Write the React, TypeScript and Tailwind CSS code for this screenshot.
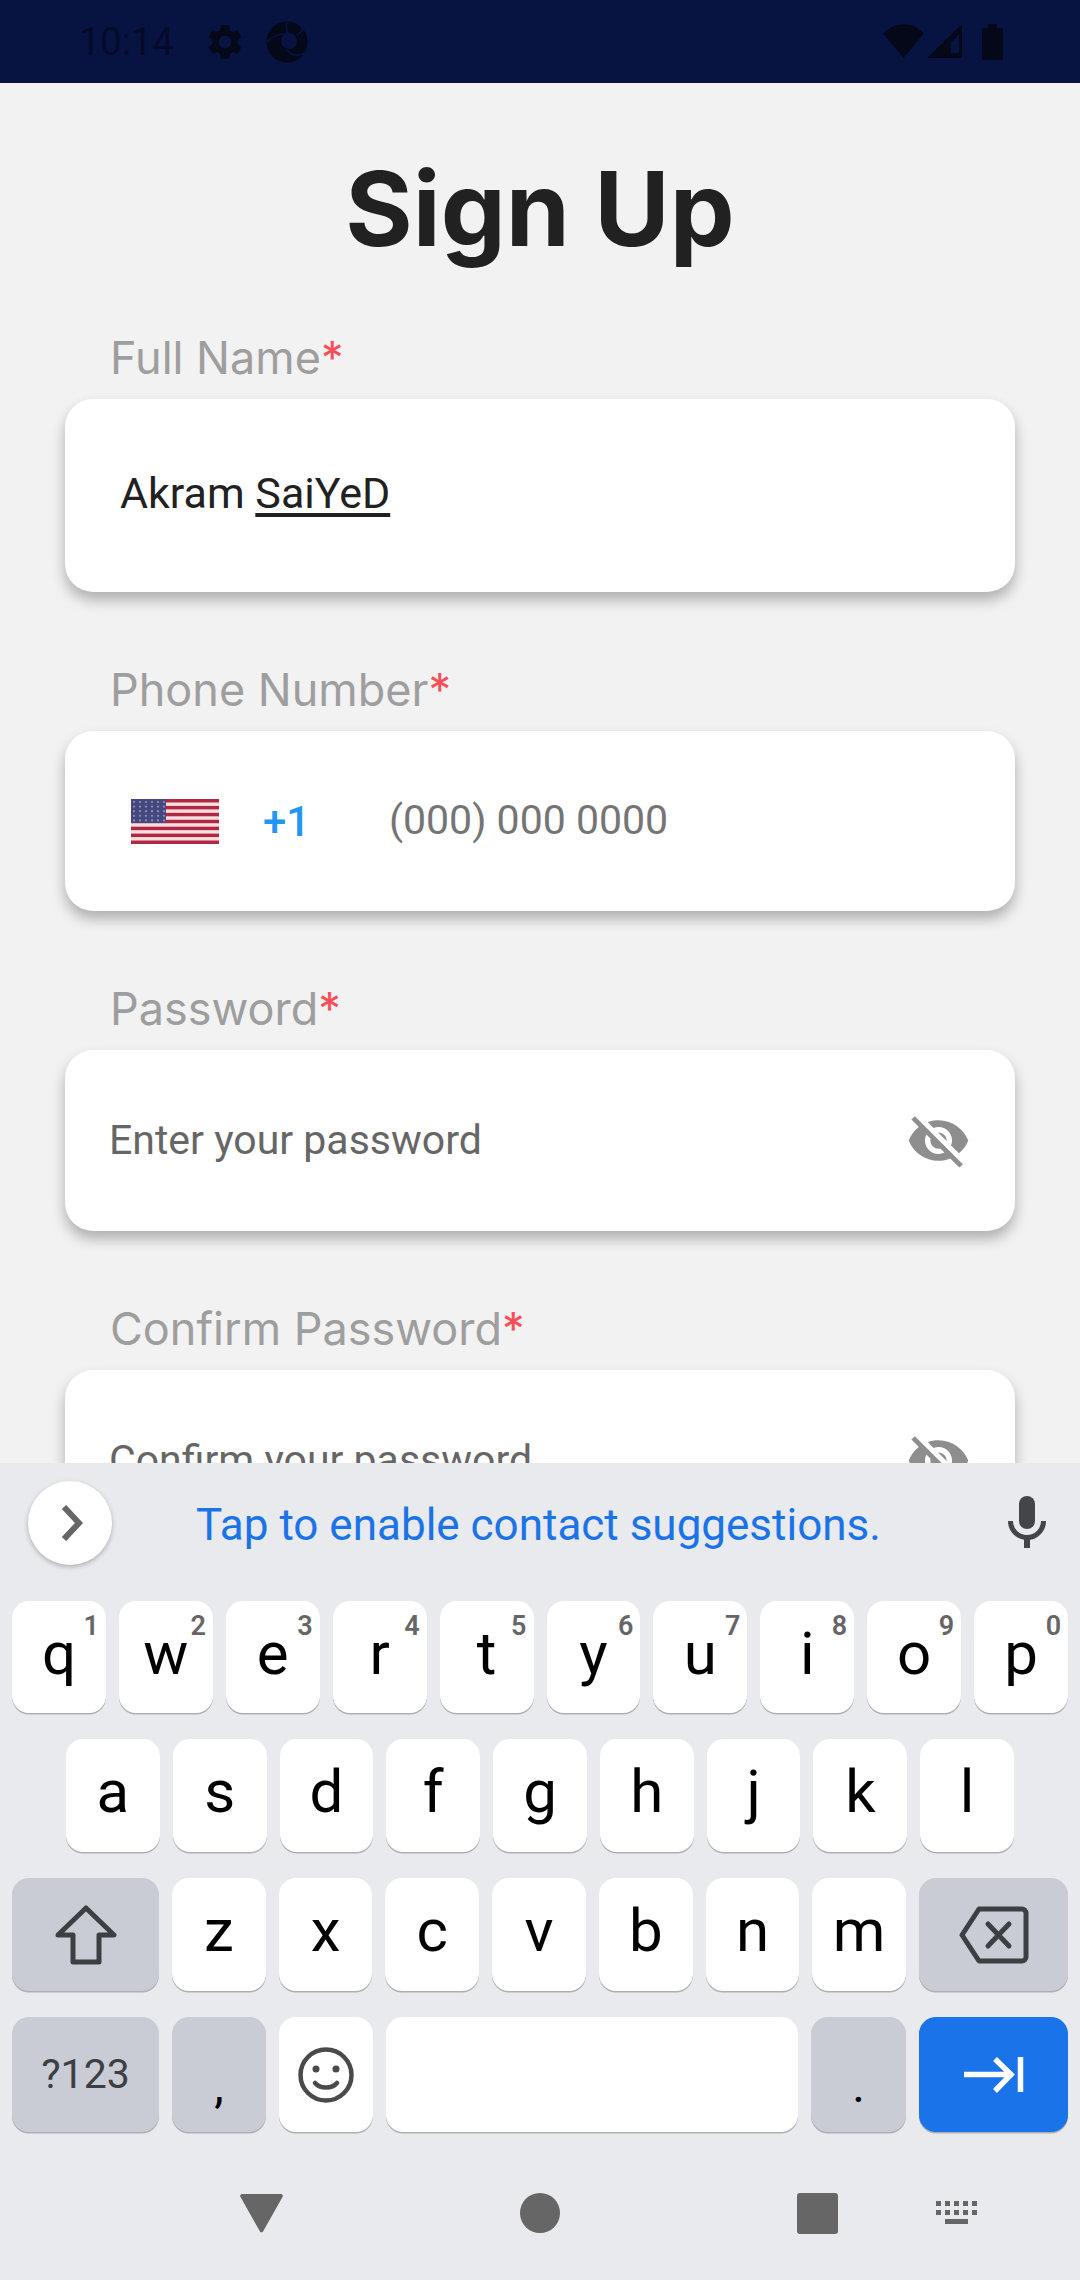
import React from "react";
import { MdSettings, MdVisibilityOff } from "react-icons/md";

const roboto = { fontFamily: "Roboto, sans-serif" };

const Flag = () => (
  <svg width="88" height="45" viewBox="0 0 88 45" className="shrink-0 blur-[0.6px]">
    <rect width="88" height="45" fill="#f3dfe2" />
    {[0, 1, 2, 3, 4, 5, 6].map((i) => (
      <rect key={i} y={i * 6.92} width="88" height="3.46" fill="#b2263f" />
    ))}
    <rect width="35" height="24" fill="#45477f" />
    {[0, 1, 2, 3, 4].map((r) =>
      [0, 1, 2, 3, 4, 5].map((c) => (
        <circle key={`${r}-${c}`} cx={3 + c * 6} cy={3 + r * 4.6} r="1.1" fill="#8f90b5" />
      ))
    )}
  </svg>
);

const Field = ({
  label,
  height,
  children,
}: {
  label: string;
  height: string;
  children: React.ReactNode;
}) => (
  <div className="shrink-0">
    <p className="pl-[45px] h-[50px] mb-[16px] leading-[50px] text-[45px] text-[#9e9e9e]">
      {label}
      <span className="text-[#ff4d55]">*</span>
    </p>
    <div
      className={`${height} bg-white rounded-[28px] shadow-[0_8px_14px_rgba(0,0,0,0.28)] flex items-center`}
    >
      {children}
    </div>
  </div>
);

const PasswordRow = ({ placeholder }: { placeholder: string }) => (
  <div className="flex flex-1 items-center justify-between pl-[44px] pr-[44px]" style={roboto}>
    <span className="text-[41px] text-[#666666]">{placeholder}</span>
    <MdVisibilityOff className="text-[65px] text-[#8e8e8e]" />
  </div>
);

const Key = ({ letter, hint }: { letter: string; hint?: string }) => (
  <div className="relative flex-1 bg-white rounded-[17px] shadow-[0_1.5px_0_#aeafb3] flex justify-center">
    <span className="text-[60px] leading-[70px] mt-[18px] text-black">{letter}</span>
    {hint && (
      <span className="absolute top-[9px] right-[7px] text-[27px] leading-[32px] font-semibold text-[#666666]">
        {hint}
      </span>
    )}
  </div>
);

const GrayKey = ({ className, children }: { className: string; children: React.ReactNode }) => (
  <div
    className={`${className} bg-[#c9ccd4] rounded-[17px] shadow-[0_1.5px_0_#aeafb3] flex items-center justify-center`}
  >
    {children}
  </div>
);

const row1 = [
  ["q", "1"],
  ["w", "2"],
  ["e", "3"],
  ["r", "4"],
  ["t", "5"],
  ["y", "6"],
  ["u", "7"],
  ["i", "8"],
  ["o", "9"],
  ["p", "0"],
];

export default function App() {
  return (
    <div className="w-[1080px] h-[2280px] flex flex-col overflow-hidden bg-[#f2f2f2]" style={{ fontFamily: "Inter, sans-serif" }}>
      {/* Status bar */}
      <div className="h-[83px] shrink-0 bg-[#071442] flex items-center pl-[79px] pr-[77px] text-[#050a29]">
        <span className="text-[38px] leading-none" style={roboto}>
          10:14
        </span>
        <MdSettings className="text-[42px] ml-[30px] text-[#040819]" />
        <svg width="42" height="42" viewBox="0 0 42 42" className="ml-[20px]">
          <circle cx="21" cy="21" r="20.5" fill="#040819" />
          <circle cx="23" cy="20" r="8" fill="#071442" />
          <path d="M1 21C8 13 16 13 22 12C20 6 20 3 21 1" fill="none" stroke="#071442" strokeWidth="1.5" />
          <path d="M31 14C38 10 36 5 34 5" fill="none" stroke="#071442" strokeWidth="1.5" />
          <path d="M20 28C24 34 30 36 38 32" fill="none" stroke="#071442" strokeWidth="1.5" />
        </svg>
        <div className="flex-1" />
        <svg width="42" height="35" viewBox="0 0 42 35">
          <path d="M0 9.5C12 -3 30 -3 41 9.5L20.5 34Z" fill="#040819" />
        </svg>
        <svg width="35" height="35" viewBox="0 0 35 35" className="ml-[2px]">
          <path d="M35 0V34H0Z" fill="#040819" />
          <path d="M32 10V29H24V19Z" fill="#071442" />
        </svg>
        <svg width="21" height="36" viewBox="0 0 21 36" className="ml-[20px]">
          <path d="M6 0H15V4H19.5A1.5 1.5 0 0 1 21 5.5V34.5A1.5 1.5 0 0 1 19.5 36H1.5A1.5 1.5 0 0 1 0 34.5V5.5A1.5 1.5 0 0 1 1.5 4H6Z" fill="#040819" />
        </svg>
      </div>

      {/* Form */}
      <div className="flex-1 min-h-0 overflow-hidden px-[65px]">
        <h1 className="h-[250px] pt-[59px] text-center text-[103px] leading-[134px] font-bold text-[#212121]">
          Sign Up
        </h1>
        <div className="flex flex-col gap-[73px]">
          <Field label="Full Name" height="h-[193px]">
            <span className="pl-[55px] mb-[4px] text-[43px] text-[#212121]" style={roboto}>
              Akram <span className="underline underline-offset-[5px]">SaiYeD</span>
            </span>
          </Field>
          <Field label="Phone Number" height="h-[180px]">
            <div className="flex items-center pl-[66px]" style={roboto}>
              <Flag />
              <span className="ml-[44px] w-[126px] text-[42px] font-medium text-[#2196f3]">+1</span>
              <span className="text-[41px] text-[#757575]">(000) 000 0000</span>
            </div>
          </Field>
          <Field label="Password" height="h-[181px]">
            <PasswordRow placeholder="Enter your password" />
          </Field>
          <Field label="Confirm Password" height="h-[181px]">
            <PasswordRow placeholder="Confirm your password" />
          </Field>
        </div>
      </div>

      {/* Keyboard */}
      <div className="h-[817px] shrink-0 bg-[#e8eaed] flex flex-col" style={roboto}>
        <div className="h-[138px] shrink-0 flex items-start">
          <div className="mt-[18px] ml-[28px] w-[84px] h-[84px] rounded-full bg-white shadow-[0_2px_5px_rgba(0,0,0,0.25)] flex items-center justify-center">
            <svg width="22" height="36" viewBox="0 0 22 36" fill="none" stroke="#666666" strokeWidth="6" className="ml-[3px]">
              <path d="M3 2L18 18L3 34" />
            </svg>
          </div>
          <span className="mt-[36px] ml-[84px] text-[44px] leading-[52px] text-[#1a73e8]">
            Tap to enable contact suggestions.
          </span>
          <svg width="38" height="52" viewBox="0 0 38 52" className="mt-[33px] ml-[127px]" fill="#444548">
            <rect x="11" width="16" height="33" rx="8" />
            <path d="M2.5 25A16.5 16.5 0 0 0 35.5 25" fill="none" stroke="#444548" strokeWidth="5" />
            <rect x="16" y="40" width="6" height="12" />
          </svg>
        </div>

        <div className="flex flex-col gap-[26px] px-[12px]">
          <div className="h-[112px] flex gap-[13px]">
            {row1.map(([l, n]) => (
              <Key key={l} letter={l} hint={n} />
            ))}
          </div>
          <div className="h-[113px] flex gap-[13px] px-[54px]">
            {["a", "s", "d", "f", "g", "h", "j", "k", "l"].map((l) => (
              <Key key={l} letter={l} />
            ))}
          </div>
          <div className="h-[113px] flex gap-[13px]">
            <GrayKey className="w-[147px]">
              <svg width="62" height="60" viewBox="0 0 62 60" fill="none" stroke="#3c4043" strokeWidth="5" strokeLinejoin="round">
                <path d="M31 3L59 30H44V57H18V30H3Z" />
              </svg>
            </GrayKey>
            {["z", "x", "c", "v", "b", "n", "m"].map((l) => (
              <Key key={l} letter={l} />
            ))}
            <GrayKey className="w-[149px]">
              <svg width="70" height="58" viewBox="0 0 70 58" fill="none" stroke="#3c4043" strokeWidth="5" strokeLinejoin="round" strokeLinecap="round">
                <path d="M20 3H63A4 4 0 0 1 67 7V51A4 4 0 0 1 63 55H20L3 29Z" />
                <path d="M29 18L50 40M50 18L29 40" />
              </svg>
            </GrayKey>
          </div>
          <div className="h-[115px] flex gap-[13px]">
            <GrayKey className="w-[147px]">
              <span className="text-[41px] text-[#3c4043]">?123</span>
            </GrayKey>
            <GrayKey className="w-[94px]">
              <span className="text-[48px] leading-none mt-[22px] text-black">,</span>
            </GrayKey>
            <div className="w-[94px] bg-white rounded-[17px] shadow-[0_1.5px_0_#aeafb3] flex items-center justify-center">
              <svg width="58" height="58" viewBox="0 0 58 58" fill="none" stroke="#4a4a4c" strokeWidth="4.5" strokeLinecap="round">
                <circle cx="29" cy="29" r="25.5" />
                <circle cx="19" cy="23" r="3.5" fill="#4a4a4c" stroke="none" />
                <circle cx="39" cy="23" r="3.5" fill="#4a4a4c" stroke="none" />
                <path d="M18 37C23 43 35 43 40 37" />
              </svg>
            </div>
            <div className="flex-1 bg-white rounded-[17px] shadow-[0_1.5px_0_#aeafb3]" />
            <GrayKey className="w-[95px]">
              <span className="text-[48px] leading-none mt-[22px] text-black">.</span>
            </GrayKey>
            <div className="w-[149px] bg-[#1a73e8] rounded-[17px] shadow-[0_1.5px_0_#aeafb3] flex items-center justify-center">
              <svg width="60" height="36" viewBox="0 0 60 36" fill="none" stroke="#ffffff" strokeWidth="5.5">
                <path d="M0 17.5H47M31 2L47 17.5L31 34" />
                <path d="M56.5 0V35" />
              </svg>
            </div>
          </div>
        </div>

        {/* Nav bar */}
        <div className="flex-1 relative">
          <div className="flex items-center h-full">
            <svg width="45" height="40" viewBox="0 0 45 40" className="ml-[239px] mt-[14px]">
              <path d="M3 1H42A2 2 0 0 1 43.5 4L24 38.5A2 2 0 0 1 21 38.5L1.5 4A2 2 0 0 1 3 1Z" fill="#666666" />
            </svg>
            <div className="ml-[236px] mt-[14px] w-[40px] h-[40px] rounded-full bg-[#666666]" />
            <div className="ml-[237px] mt-[14px] w-[41px] h-[41px] rounded-[3px] bg-[#666666]" />
            <svg width="41" height="23" viewBox="0 0 41 23" className="ml-[98px] mt-[12px]" fill="#666666">
              {[0, 1, 2, 3, 4].map((i) => (
                <React.Fragment key={i}>
                  <rect x={i * 9} width="5" height="5" />
                  <rect x={i * 9} y="9" width="5" height="5" />
                </React.Fragment>
              ))}
              <rect x="9" y="18" width="23" height="5" />
            </svg>
          </div>
        </div>
      </div>
    </div>
  );
}
